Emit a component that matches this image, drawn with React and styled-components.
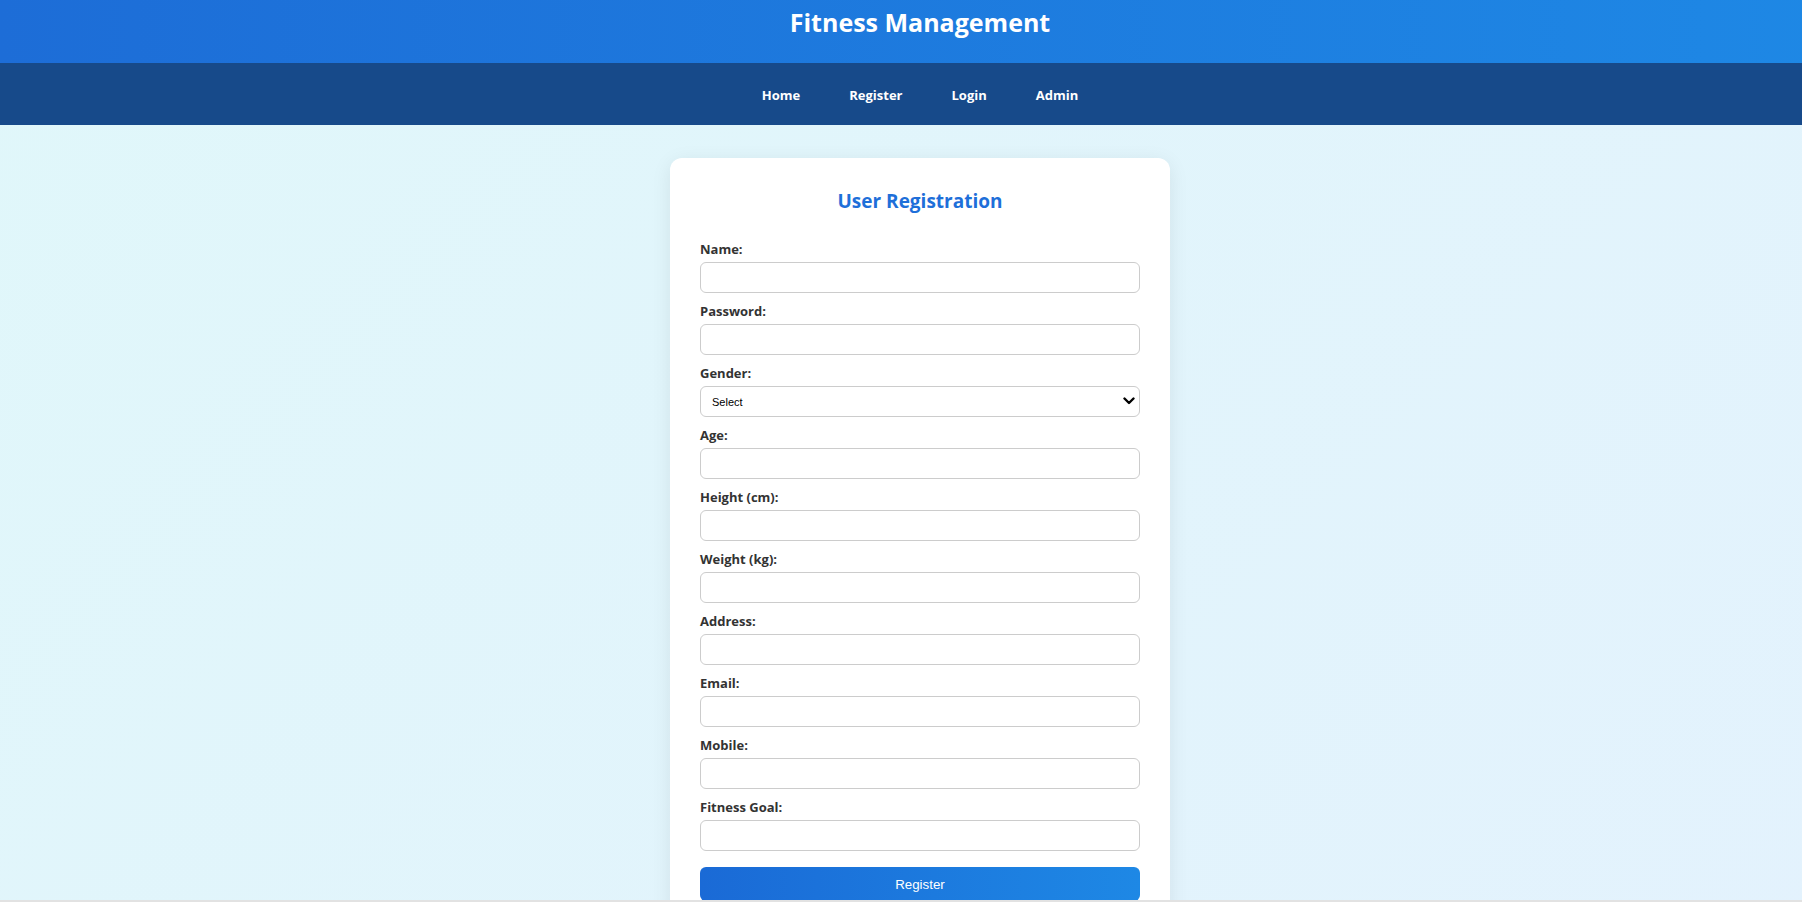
import React from 'react'
import styled, { createGlobalStyle } from 'styled-components'

const GlobalStyle = createGlobalStyle`
    html, body {
        margin: 0;
        padding: 0;
        overflow: hidden;
    }
    body {
        font-family: 'Open Sans', 'Noto Sans', sans-serif;
        background: linear-gradient(135deg, #e0f7fa, #e3f2fd);
    }
`

const fields = [
    { label: 'Name:', type: 'text' },
    { label: 'Password:', type: 'password' },
    { label: 'Gender:', type: 'select' },
    { label: 'Age:', type: 'number' },
    { label: 'Height (cm):', type: 'number' },
    { label: 'Weight (kg):', type: 'number' },
    { label: 'Address:', type: 'text' },
    { label: 'Email:', type: 'email' },
    { label: 'Mobile:', type: 'text' },
    { label: 'Fitness Goal:', type: 'text' },
]

function App() {
    return (
        <Page>
            <GlobalStyle />
            <Header>
                <Title>Fitness Management</Title>
            </Header>
            <Nav>
                <NavLink href="#">Home</NavLink>
                <NavLink href="#">Register</NavLink>
                <NavLink href="#">Login</NavLink>
                <NavLink href="#">Admin</NavLink>
            </Nav>
            <Main>
                <Card>
                    <CardTitle>User Registration</CardTitle>
                    <form onSubmit={(e) => e.preventDefault()}>
                        {fields.map((f) => (
                            <Field key={f.label}>
                                <Label>{f.label}</Label>
                                {f.type === 'select' ? (
                                    <SelectWrap>
                                        <Select defaultValue="">
                                            <option value="">Select</option>
                                            <option value="male">Male</option>
                                            <option value="female">Female</option>
                                        </Select>
                                        <Chevron width="12" height="8" viewBox="0 0 12 8">
                                            <polyline points="1.5,1.5 6,6 10.5,1.5" fill="none" stroke="#000" strokeWidth="2.4" strokeLinecap="round" strokeLinejoin="round" />
                                        </Chevron>
                                    </SelectWrap>
                                ) : (
                                    <Input type={f.type} />
                                )}
                            </Field>
                        ))}
                        <SubmitButton type="submit">Register</SubmitButton>
                    </form>
                </Card>
            </Main>
            <ScrollEdge />
        </Page>
    )
}

export default App

const Page = styled.div`
    width: 1840px;
    min-height: 902px;
    background: linear-gradient(135deg, #e0f7fa, #e3f2fd);
`
const Header = styled.header`
    height: 63px;
    box-sizing: border-box;
    padding-top: 4px;
    background: linear-gradient(90deg, #1d6dd7, #1e88e5);
    text-align: center;
`
const Title = styled.h1`
    margin: 0;
    color: #fff;
    font-size: 25px;
    line-height: 36px;
    font-weight: 700;
`
const Nav = styled.nav`
    height: 62px;
    box-sizing: border-box;
    padding-top: 1px;
    background: #174a8a;
    display: flex;
    justify-content: center;
    align-items: center;
    gap: 49px;
`
const NavLink = styled.a`
    color: #fff;
    font-size: 13px;
    font-weight: 700;
    text-decoration: none;
`
const Main = styled.main`
    padding-top: 33px;
`
const Card = styled.div`
    width: 500px;
    box-sizing: border-box;
    margin: 0 auto;
    padding: 30px;
    background: #fff;
    border-radius: 12px;
    box-shadow: 0 4px 20px rgba(0, 0, 0, 0.08);
`
const CardTitle = styled.h2`
    margin: 0 0 25px;
    text-align: center;
    color: #1e6fd9;
    font-size: 19px;
    line-height: 27px;
    font-weight: 700;
`
const Field = styled.div`
    margin-bottom: 9px;
`
const Label = styled.label`
    display: block;
    margin-bottom: 3px;
    color: #333;
    font-size: 13px;
    line-height: 19px;
    font-weight: 700;
`
const Input = styled.input`
    display: block;
    width: 100%;
    height: 31px;
    box-sizing: border-box;
    border: 1px solid #ccc;
    border-radius: 6px;
    padding: 0 10px;
    font-family: 'Liberation Sans', Arial, sans-serif;
    font-size: 13px;
    background: #fff;
    outline: none;
`
const SelectWrap = styled.div`
    position: relative;
`
const Select = styled.select`
    display: block;
    width: 100%;
    height: 31px;
    box-sizing: border-box;
    border: 1px solid #ccc;
    border-radius: 6px;
    padding: 0 11px;
    appearance: none;
    background: #fff;
    color: #000;
    font-family: 'Liberation Sans', Arial, sans-serif;
    font-size: 11px;
    outline: none;
`
const Chevron = styled.svg`
    position: absolute;
    right: 5px;
    top: 11px;
    pointer-events: none;
`
const SubmitButton = styled.button`
    display: block;
    width: 100%;
    height: 34px;
    margin-top: 16px;
    border: none;
    border-radius: 6px;
    background: linear-gradient(90deg, #1a6ad6, #1e88e5);
    color: #fff;
    font-family: 'Liberation Sans', Arial, sans-serif;
    font-size: 13.33px;
    cursor: pointer;
`
const ScrollEdge = styled.div`
    position: fixed;
    left: 0;
    right: 0;
    bottom: 0;
    height: 2px;
    background: #e2e2e2;
`
